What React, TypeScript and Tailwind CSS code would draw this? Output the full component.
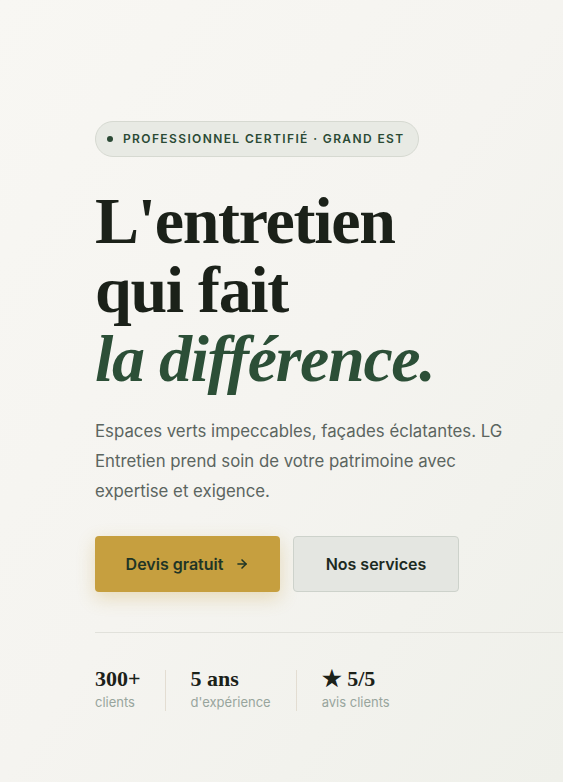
import React from "react";

const serif = { fontFamily: '"Liberation Serif", "Times New Roman", serif' };

export default function App() {
  return (
    <div
      className="min-h-[782px] w-full overflow-hidden bg-gradient-to-br from-[#f8f7f3] via-[#f5f4f0] to-[#eff0ea] font-['Inter',sans-serif]"
    >
      <div className="pl-[95px] pt-[121px]">
        {/* badge */}
        <div className="inline-flex h-[36px] items-center gap-[10px] rounded-full border border-[#d6d9d1] bg-[#e8eae4] pl-[11px] pr-[13px]">
          <span className="h-[6px] w-[6px] rounded-full bg-[#2b4a35]" />
          <span className="text-[12px] font-semibold uppercase tracking-[0.115em] text-[#2b4a35]">
            Professionnel certifié · Grand Est
          </span>
        </div>

        {/* heading */}
        <h1
          style={serif}
          className="mt-[29px] text-[66px] font-bold leading-[69px] tracking-[-0.02em] text-[#1b2119]"
        >
          L'entretien
          <br />
          qui fait
          <br />
          <em className="text-[#2c4f37]">la différence.</em>
        </h1>

        {/* lead */}
        <p className="mt-[23px] max-w-[420px] text-[16.8px] leading-[30px] text-[#5b6560]">
          Espaces verts impeccables, façades éclatantes. LG Entretien prend soin de votre patrimoine avec
          expertise et exigence.
        </p>

        {/* actions */}
        <div className="mt-[30px] flex gap-[13px]">
          <button className="flex h-[56px] w-[185px] items-center justify-center gap-[12px] rounded-[4px] bg-[#c69f3f] text-[16px] font-semibold text-[#1f3526] shadow-[0_6px_18px_rgba(198,159,63,0.3)]">
            Devis gratuit
            <svg width="14" height="14" viewBox="0 0 24 24" fill="none" stroke="currentColor" strokeWidth="2.6" strokeLinecap="round" strokeLinejoin="round">
              <path d="M5 12h14" />
              <path d="M12 5l7 7-7 7" />
            </svg>
          </button>
          <button className="flex h-[56px] w-[166px] items-center justify-center rounded-[4px] border border-[#cdd2cb] bg-[#e4e6e1] text-[16px] font-semibold text-[#1c2a22]">
            Nos services
          </button>
        </div>

        {/* stats */}
        <div className="mt-[40px] border-t border-[#e1e1db] pt-[37px]">
          <div className="flex items-stretch">
            <div className="pr-[24px]">
              <div style={serif} className="text-[22px] font-bold leading-[18px] text-[#1b2119]">300+</div>
              <div className="mt-[5px] text-[13px] leading-[18px] text-[#98a59d]">clients</div>
            </div>
            <div className="w-px bg-[#e3ddd2]" />
            <div className="px-[25px]">
              <div style={serif} className="text-[22px] font-bold leading-[18px] text-[#1b2119]">5 ans</div>
              <div className="mt-[5px] text-[13px] leading-[18px] text-[#98a59d]">d'expérience</div>
            </div>
            <div className="w-px bg-[#e3ddd2]" />
            <div className="pl-[25px]">
              <div style={serif} className="text-[22px] font-bold leading-[18px] text-[#1b2119]">★ 5/5</div>
              <div className="mt-[5px] text-[13px] leading-[18px] text-[#98a59d]">avis clients</div>
            </div>
          </div>
        </div>
      </div>
    </div>
  );
}
